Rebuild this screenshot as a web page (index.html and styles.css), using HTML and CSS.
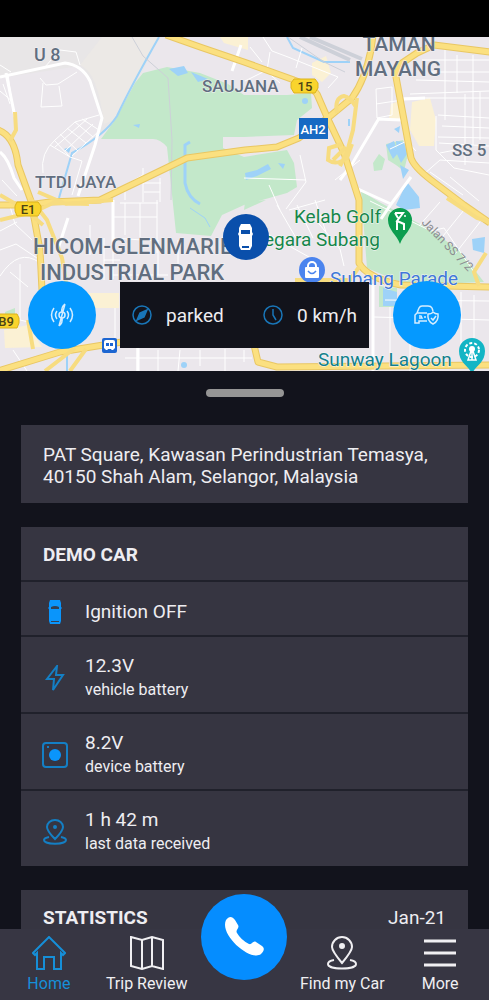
FILE: index.html
```html
<!DOCTYPE html>
<html lang="en">
<head>
  <meta charset="utf-8">
  <meta name="viewport" content="width=device-width, initial-scale=1">
  <title>Demo Car</title>
  <link rel="stylesheet" href="styles.css">
</head>
<body>
  <div class="app">
    <div class="status-bar"></div>

    <section class="map">
      <svg class="map-canvas" viewBox="0 37 489 334" preserveAspectRatio="xMidYMid slice">
        <rect x="0" y="37" width="489" height="334" fill="#ebe7ec"/>
        <path d="M0 37H158L142 72L115 120L98 136L103 118Q88 72 80 66L0 78Z" fill="#e8e6e7"/>
        <path d="M102 37H158L140 75L114 120L104 124Q98 72 80 65Z" fill="#ece9e6"/>

        <!-- sandy blocks -->
        <g fill="#fbf1d4">
          <path d="M312 63L326 56L331 73L322 82L312 75Z"/>
          <path d="M412 102L430 98L436 120L434 146L419 146L410 130Z"/>
          <path d="M80 293H119V308H80ZM4 330L28 325L42 347L5 348Z"/>
          <path d="M220 37H248V50L224 43Z"/>
          <path d="M391 104L402 100V119H389Z"/>
        </g>

        <!-- parks -->
        <g fill="#c3e8ca">
          <path d="M143 73L167 67L200 73L228 84L244 95L287 95L311 93L312 108L297 120L294 135L244 137H223V148L244 157L287 150L294 163L297 187L287 193L244 205L222 215L211 236L176 233L167 147Q160 139 153 139L101 139L115 120L135 83Z"/>
          <path d="M361 191L381 203L431 230L460 251L484 282L437 284L400 282L367 268Z"/>
          <path d="M373 163L379 154L385 159L382 170L374 171Z"/>
          <path d="M386 144L403 140L408 154L404 171L396 165L388 160Z"/>
          <path d="M379 286L397 288V307H379ZM5 312L15 308V320H5ZM245 202L266 200L244 210Z"/>
        </g>

        <!-- water -->
        <g fill="#9ed2f8">
          <path d="M169 69L184 66L188 73L178 76ZM191 72L208 79L198 82Z"/>
          <path d="M386 145L394 141L398 153L393 159ZM396 141L404 142L407 154L401 163L397 154ZM400 165L409 170L403 179Z"/>
          <path d="M396 205L407 182L419 197L420 208L404 210ZM472 239L485 237L484 253L473 250Z"/>
          <path d="M383 288L397 292V306H383ZM133 125L140 124L139 128ZM64 149L71 147L69 153Z"/>
          <path d="M245 173L257 170L268 164L271 169L257 176L246 180ZM278 163L285 164L283 169ZM394 129L400 126L399 133Z"/>
          <circle cx="184" cy="365" r="3"/>
          <circle cx="305" cy="101" r="3"/>
        </g>
        <g fill="none" stroke="#9ed2f8" stroke-width="3">
          <path d="M190 142L185 145V183Q188 198 200 204"/>
          <path d="M159 37Q130 88 117 116Q105 135 72 153L59 198" stroke-width="2"/>
          <path d="M287 37L293 48L324 62H350M349 119V126M67 353V371" stroke-width="2"/>
          <path d="M190 208L205 218L210 227" stroke-width="1"/>
        </g>
        <g fill="none" stroke="#cdd0d8">
          <path d="M132 37L143 56L168 78L172 140L171 200M288 37L324 62L345 72"/>
          <path d="M300 37L350 60M310 37L362 59" stroke-width="4"/>
        </g>

        <!-- local streets -->
        <g fill="none" stroke="#fff" stroke-width="1">
          <path d="M40 78L46 85L58 84L77 72M43 83L41 107L62 106L59 86M0 65L11 72M44 68L60 50L76 52L80 65M0 91L13 102M8 74L13 111M3 84L10 104"/>
          <path d="M43 173Q40 153 55 140L75 122L99 115M50 145L70 157L82 161M54 140L70 157M60 134L78 151M67 128L86 143M75 122L93 137M82 119L99 130M55 147L87 119M65 151L93 124M72 156L99 131M82 161L72 195"/>
          <path d="M125 200V185L143 175M143 168V202M130 183H161M144 192H160M160 178V202M113 200V238L157 241M120 203H158M114 217H157M125 203V235M140 203V237M157 200V253M104 238V280M90 225V255"/>
          <path d="M0 231L17 222M0 250L16 244L40 260M0 276Q19 247 40 263M10 206L15 224L32 240M2 180L17 196M20 264V320M10 272L28 287"/>
          <path d="M245 81L267 70L270 52M250 47L262 62M263 37L272 51L288 57L323 71M302 48L296 68M265 70L280 83M323 71L338 77L328 88M300 155L306 182L286 209M244 178L306 180M269 185L280 210"/>
          <path d="M376 89L392 87V115L377 118ZM376 104L402 100M402 98H489M410 94L489 91M422 60H489M430 72H489M416 80L489 82M445 48V120M457 55V93M473 55V145M465 94V165M480 92V140M438 115L489 118M442 126L489 128M438 137L489 138"/>
          <path d="M436 116V150L454 168L489 175M424 174L440 160L489 163M439 143L489 146M440 153L455 150M450 177L479 201M430 172L463 195M390 149L407 141L416 151M335 180L360 160M315 219L340 249L344 266M289 210L325 200"/>
          <path d="M370 201L431 231L444 228L474 272M440 202L419 226M464 210L443 236M480 222L455 254M385 300L489 301M374 317L489 320M410 292V371M435 290V317M461 292V355M474 295V352M390 307V360"/>
          <path d="M113 240V279M104 260H120M112 275H168M158 240V275M178 240V268M115 308V340M20 320L62 330M13 350L27 371M137 348V371M158 350V371M180 350L178 371M200 350V366M225 349V371M244 350V362M125 358H252M246 222L318 262M277 205L296 238M297 205L313 238M315 200L326 232"/>
        </g>
        <g fill="none" stroke="#fff" stroke-width="3">
          <path d="M0 77L65 63Q82 65 90 81L102 118L95 145L78 196M6 73L15 117"/>
          <path d="M0 152Q8 158 14 178L22 190M241 45L232 71M378 120L352 164L340 180M377 119L402 120M358 189L391 204M411 177L391 204L381 219M404 99L425 98"/>
          <path d="M68 218L57 252M113 200L113 245M373 284V371M138 340V371"/>
        </g>

        <!-- highways: casing first, fill on top -->
        <g fill="none" stroke="#e9c763" stroke-width="7" stroke-linejoin="round">
          <path d="M166 35L200 47L244 62L294 80Q312 86 317 94L327 117L344 153L359 200L359 263Q367 278 401 285L490 287"/>
          <path d="M-2 205L28 205L50 202L100 200L187 158L245 150L277 147L299 138L329 117L352 98Q365 80 371 50L373 35"/>
          <path d="M490 52L434 45L417 53L399 65L396 77L404 120L411 158Q414 167 431 180L464 205L490 223"/>
          <path d="M-2 130Q15 136 18 165L31 201L40 250L42 290"/>
          <path d="M-2 371L60 352L122 342M254 345L258 362L277 367L490 365"/>
        </g>
        <g fill="none" stroke="#fbe080" stroke-width="5" stroke-linejoin="round">
          <path d="M166 35L200 47L244 62L294 80Q312 86 317 94L327 117L344 153L359 200L359 263Q367 278 401 285L490 287"/>
          <path d="M-2 205L28 205L50 202L100 200L187 158L245 150L277 147L299 138L329 117L352 98Q365 80 371 50L373 35"/>
          <path d="M490 52L434 45L417 53L399 65L396 77L404 120L411 158Q414 167 431 180L464 205L490 223"/>
          <path d="M-2 130Q15 136 18 165L31 201L40 250L42 290"/>
          <path d="M-2 371L60 352L122 342M254 345L258 362L277 367L490 365"/>
        </g>
        <g fill="none" stroke="#f7dc80" stroke-width="4">
          <path d="M15 112L16 130L10 141M30 198L47 220L62 258L66 282M38 192L66 204L113 200M0 220L29 213L43 225M0 195L28 211M36 211L53 203L89 204"/>
          <path d="M357 98L353 130L347 152L340 166M337 113Q334 98 344 96Q350 97 356 107M342 144L329 148L328 160Q336 166 347 158L352 144M346 147L333 160"/>
          <path d="M447 198L477 218L490 222M486 253L474 272L479 286M295 280H350L359 267M28 320L33 349M45 371L75 348M70 371L86 349"/>
        </g>

        <!-- district names -->
        <g class="district">
          <text x="34" y="61" font-size="18">U 8</text>
          <text x="202" y="92" font-size="17">SAUJANA</text>
          <text x="35" y="188" font-size="17">TTDI JAYA</text>
          <text x="452" y="156" font-size="17">SS 5</text>
          <text x="399" y="51" font-size="21" text-anchor="middle">TAMAN</text>
          <text x="398" y="76" font-size="21" text-anchor="middle">MAYANG</text>
          <text x="33" y="254" font-size="22">HICOM-GLENMARIE</text>
          <text x="40" y="280" font-size="22">INDUSTRIAL PARK</text>
        </g>
        <text class="street" transform="translate(421 223) rotate(46)">Jalan SS 7/2</text>

        <!-- road shields -->
        <g class="shield">
          <path d="M294 79H315L318 83V88L315 93H294L291 88V83Z"/>
          <text x="305" y="91">15</text>
          <path d="M17 202H38L41 206V211L38 216H17L15 211V206Z"/>
          <text x="28" y="214">E1</text>
          <path d="M-4 314H17L19 318V323L17 328H-4Z"/>
          <text x="6" y="326">B9</text>
        </g>
        <rect x="299" y="118" width="29" height="21" fill="#1769c3"/>
        <text x="313" y="134" class="shield-blue">AH2</text>

        <!-- places -->
        <g class="place">
          <text x="381" y="223" text-anchor="end" fill="#16864b">Kelab Golf</text>
          <text x="380" y="246" text-anchor="end" fill="#16864b">Negara Subang</text>
          <text x="330" y="285" fill="#3f78d8">Subang Parade</text>
          <text x="318" y="366" fill="#12808c">Sunway Lagoon</text>
        </g>
        <path d="M400 244C397 235 388 230 388 220A12 12 0 0 1 412 220C412 230 403 235 400 244Z" fill="#0c9d4f"/>
        <g fill="none" stroke="#fff" stroke-width="2">
          <path d="M395 213H403L397 221L404 224V230M397 221V230M395 213L398 218"/>
          <circle cx="405" cy="216" r="1" fill="#fff" stroke="none"/>
        </g>
        <circle cx="312" cy="270" r="13" fill="#4b84ee"/>
        <rect x="305" y="267" width="14" height="11" rx="1" fill="#fff"/>
        <path d="M308 269V266A4 4 0 0 1 316 266V269" fill="none" stroke="#fff" stroke-width="2"/>
        <path d="M308 271Q312 276 316 271" fill="none" stroke="#4b84ee" stroke-width="1.5"/>
        <path d="M472 374C469 366 459 363 459 351A13 13 0 0 1 485 351C485 363 475 366 472 374Z" fill="#13b5c5"/>
        <circle cx="472" cy="350" r="7" fill="none" stroke="#fff" stroke-width="2" stroke-dasharray="3 2"/>
        <path d="M472 348L468 360H476ZM472 350V360" fill="none" stroke="#fff" stroke-width="1.5"/>
        <circle cx="472" cy="349" r="3" fill="#fff"/>
        <rect x="102" y="338" width="15" height="15" rx="2" fill="#1d66d1"/>
        <path d="M106 340H113Q115 340 115 342V348L113 350H106L104 348V342Q104 340 106 340Z" fill="#fff"/>
        <path d="M106 343H109V346H106ZM110 343H113V346H110ZM106 352L108 349H111L113 352" fill="#1d66d1"/>

        <!-- current car position -->
        <circle cx="246" cy="237" r="23" fill="#0a4fab"/>
        <path d="M241 224H250L252 228V232L253 234L252 236V246L250 250H241L239 246V236L238 234L239 232V228Z" fill="#fff"/>
        <path d="M241 230H250V234H241ZM242 246H249V248H242Z" fill="#0a4fab"/>
      </svg>

      <div class="map-controls">
        <button class="round-btn" type="button" aria-label="Engine signal">
          <svg width="24" height="24" viewBox="0 0 24 24">
            <path d="M15 1Q11 4 12 9M9 23Q13 20 12 15M15 1L9 23M4 5Q-1 12 4 19M7 8Q4 12 7 16M20 5Q25 12 20 19M17 8Q20 12 17 16"/>
            <circle cx="12" cy="12" r="3"/>
          </svg>
        </button>
        <div class="state-panel">
          <span class="state">
            <svg width="20" height="20" viewBox="0 0 20 20">
              <circle cx="10" cy="10" r="9"/>
              <path d="M15 5L12 12L5 15L8 8Z" fill="#1976b8"/>
            </svg>
            parked
          </span>
          <span class="state">
            <svg width="20" height="20" viewBox="0 0 20 20">
              <circle cx="10" cy="10" r="9"/>
              <path d="M10 4V10L13 15"/>
            </svg>
            0 km/h
          </span>
        </div>
        <button class="round-btn" type="button" aria-label="Car guard">
          <svg width="24" height="24" viewBox="0 0 24 24">
            <path d="M2 10L4 5Q5 3 7 3H13Q16 3 17 5L18 8M2 10L0 12V20H4V18H12M2 10H12M4 13H6L7 15H4M9 14H11M13 11Q17 11 18 9Q20 11 23 11Q24 18 18 21Q12 18 13 11ZM16 15L18 17L21 13"/>
          </svg>
        </button>
      </div>
    </section>

    <main class="sheet">
      <div class="handle"></div>

      <section class="card address">
        PAT Square, Kawasan Perindustrian Temasya, 40150 Shah Alam, Selangor, Malaysia
      </section>

      <section class="card">
        <h2 class="card-title">DEMO CAR</h2>
        <div class="row row-short">
          <svg class="row-icon" width="26" height="26" viewBox="0 0 26 26">
            <path d="M8 1H18L19 4V8L20 9L19 10V22L18 25H8L7 22V10L6 9L7 8V4Z" fill="#0a95fb" stroke="none"/>
            <path d="M9 8Q13 6 17 8V10H9ZM9 22H17V23H9Z" fill="#334053" stroke="none"/>
          </svg>
          <div class="value">Ignition OFF</div>
        </div>
        <div class="row">
          <svg class="row-icon" width="26" height="26" viewBox="0 0 26 26">
            <path d="M15 1L5 14H12L11 25L21 10H14Z"/>
          </svg>
          <div>
            <div class="value">12.3V</div>
            <div class="label">vehicle battery</div>
          </div>
        </div>
        <div class="row">
          <svg class="row-icon" width="26" height="26" viewBox="0 0 26 26">
            <rect x="1" y="1" width="24" height="24" rx="3"/>
            <circle cx="13" cy="13" r="6" fill="#0a95fb" stroke="none"/>
            <path d="M5 5H7"/>
          </svg>
          <div>
            <div class="value">8.2V</div>
            <div class="label">device battery</div>
          </div>
        </div>
        <div class="row">
          <svg class="row-icon" width="26" height="26" viewBox="0 0 26 26">
            <path d="M13 20Q5 12 5 8A8 7 0 0 1 21 8Q21 12 13 20ZM7 18Q2 19 2 21C2 26 24 26 24 21Q24 19 19 18"/>
            <circle cx="13" cy="8" r="1"/>
          </svg>
          <div>
            <div class="value">1 h 42 m</div>
            <div class="label">last data received</div>
          </div>
        </div>
      </section>

      <section class="card">
        <div class="card-title">
          <h2>STATISTICS</h2>
          <span class="period">Jan-21</span>
        </div>
      </section>
    </main>

    <nav class="tabs">
      <a class="tab active" href="#home">
        <svg width="34" height="34" viewBox="0 0 34 34">
          <path d="M1 17L17 1L33 17L31 19L29 17V33H22V21H12V33H5V17L3 19Z"/>
        </svg>
        Home
      </a>
      <a class="tab" href="#trips">
        <svg width="34" height="34" viewBox="0 0 34 34">
          <path d="M1 1L12 4L22 1L33 4V33L22 30L12 33L1 30ZM12 4V33M22 1V30"/>
        </svg>
        Trip Review
      </a>
      <button class="call-btn" type="button" aria-label="Call">
        <svg width="42" height="42" viewBox="0 0 42 42">
          <path d="M3 4C6 0 9 0 12 4L15 9C17 12 12 14 14 17Q18 24 26 28C29 29 30 24 33 26L39 30C42 32 41 35 38 38C28 46-4 19 3 4Z" fill="#fff"/>
        </svg>
      </button>
      <a class="tab" href="#find">
        <svg width="34" height="34" viewBox="0 0 34 34">
          <path d="M17 27Q7 15 7 11A10 10 0 0 1 27 11Q27 15 17 27ZM9 24Q3 25 3 28C3 34 31 34 31 28Q31 25 25 24"/>
          <circle cx="17" cy="10" r="2" fill="#f0eff2"/>
        </svg>
        Find my Car
      </a>
      <a class="tab" href="#more">
        <svg width="34" height="34" viewBox="0 0 34 34">
          <path class="bars" d="M1 5H33M1 17H33M1 29H33"/>
        </svg>
        More
      </a>
    </nav>
  </div>
</body>
</html>
```

FILE: styles.css
```css
* {
  box-sizing: border-box;
}
body {
  margin: 0;
  background: #12131c;
  color: #eeedf1;
  font-family: Roboto, "Liberation Sans", sans-serif;
}
.app {
  display: flex;
  flex-direction: column;
  height: 100vh;
}
.status-bar {
  flex: none;
  height: 37px;
  background: #000;
}

/* map */
.map {
  position: relative;
  flex: none;
}
.map-canvas {
  display: block;
  width: 100%;
  height: 334px;
}
.district {
  fill: #616e7f;
  font-weight: 500;
  stroke: #f4f2f5;
  stroke-width: 1px;
  paint-order: stroke;
}
.street {
  fill: #8b8d91;
  font-size: 12px;
}
.shield {
  fill: #f9d42d;
  stroke: #dcb31c;
}
.shield text {
  fill: #4b4315;
  stroke: none;
  font-size: 13px;
  font-weight: 500;
  text-anchor: middle;
}
.shield-blue {
  fill: #fff;
  font-size: 13px;
  font-weight: 500;
  text-anchor: middle;
}
.place {
  font-size: 19px;
  stroke: #f6f6f6;
  stroke-width: 1px;
  paint-order: stroke;
}
.map-controls {
  position: absolute;
  left: 0;
  right: 0;
  bottom: 22px;
  display: flex;
  align-items: center;
  gap: 24px;
  padding: 0 28px;
}
.round-btn {
  display: flex;
  align-items: center;
  justify-content: center;
  width: 68px;
  height: 68px;
  padding: 0;
  border: none;
  border-radius: 50%;
  background: #0599ff;
  cursor: pointer;
}
.round-btn svg {
  fill: none;
  stroke: #d5edff;
  stroke-width: 1.5;
  overflow: visible;
}
.state-panel {
  flex: 1;
  display: flex;
  align-items: center;
  justify-content: space-between;
  height: 66px;
  padding: 0 12px;
  background: #12131b;
}
.state {
  display: flex;
  align-items: center;
  gap: 14px;
  font-size: 19px;
}
.state svg {
  fill: none;
  stroke: #1976b8;
  stroke-width: 1.5;
}

/* details sheet */
.sheet {
  flex: 1;
  min-height: 0;
  padding: 18px 21px 0;
  overflow-y: auto;
  scrollbar-width: none;
}
.handle {
  width: 78px;
  height: 8px;
  margin: 0 auto 28px;
  border-radius: 4px;
  background: #959595;
}
.card {
  margin-bottom: 24px;
  background: #363541;
}
.address {
  padding: 19px 22px 15px;
  font-size: 19px;
  line-height: 22px;
}
.card-title {
  display: flex;
  align-items: center;
  justify-content: space-between;
  height: 53px;
  margin: 0;
  padding: 2px 22px 0;
}
h2 {
  margin: 0;
  font-size: 19px;
  font-weight: 700;
}
.period {
  font-size: 19px;
}
.row {
  display: flex;
  align-items: center;
  gap: 17px;
  height: 77px;
  padding: 6px 21px 0;
  border-top: 2px solid #20212b;
}
.row-short {
  height: 55px;
}
.row-icon {
  fill: none;
  stroke: #147fc4;
  stroke-width: 2;
}
.value {
  font-size: 19px;
  line-height: 24px;
}
.label {
  font-size: 16px;
  line-height: 24px;
}

/* bottom tabs */
.tabs {
  flex: none;
  display: grid;
  grid-template-columns: repeat(5, 1fr);
  justify-items: center;
  height: 71px;
  padding-top: 7px;
  background: #373643;
  z-index: 1;
}
.tab {
  display: flex;
  flex-direction: column;
  align-items: center;
  gap: 4px;
  color: #f0eff2;
  font-size: 16px;
  line-height: 20px;
  text-decoration: none;
  white-space: nowrap;
}
.tab svg {
  fill: none;
  stroke: currentColor;
  stroke-width: 2;
}
.tab .bars {
  stroke-width: 3;
}
.tab.active {
  color: #168fd8;
}
.call-btn {
  display: flex;
  align-items: center;
  justify-content: center;
  width: 86px;
  height: 86px;
  margin-top: -42px;
  padding: 0;
  border: none;
  border-radius: 50%;
  background: #058dff;
  cursor: pointer;
}
```
